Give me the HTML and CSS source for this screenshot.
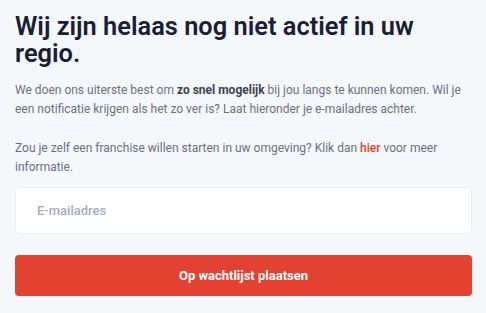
FILE: index.html
```html
<!DOCTYPE html>
<html lang="nl">
<head>
<meta charset="utf-8">
<link rel="stylesheet" href="styles.css">
</head>
<body>
<main class="notice">
  <h1 class="notice-title">Wij zijn helaas nog niet actief in uw regio.</h1>
  <p class="notice-text">We doen ons uiterste best om <strong>zo snel mogelijk</strong> bij jou langs te kunnen komen. Wil je een notificatie krijgen als het zo ver is? Laat hieronder je e-mailadres achter.</p>
  <p class="notice-text">Zou je zelf een franchise willen starten in uw omgeving? Klik dan <a class="notice-link" href="#">hier</a> voor meer informatie.</p>
  <form class="waitlist">
    <input class="waitlist-input" type="email" placeholder="E-mailadres">
    <button class="waitlist-button" type="button">Op wachtlijst plaatsen</button>
  </form>
</main>
</body>
</html>
```
FILE: styles.css
```css
html, body {
  margin: 0;
  padding: 0;
  background: #f5f8fb;
}
body {
  font-family: Roboto, "Noto Sans", sans-serif;
}
.notice {
  padding: 13px 14px 0 15px;
}
.notice-title {
  margin: 0 0 14px;
  font-size: 25.4px;
  line-height: 27px;
  font-weight: 600;
  color: #172035;
}
.notice-text {
  margin: 0 0 21px;
  font-size: 12px;
  line-height: 18.5px;
  color: #6c707c;
}
.notice-text strong {
  font-weight: 700;
  color: #3e4150;
}
.notice-link {
  color: #e2402f;
  text-decoration: none;
  font-weight: 500;
}
.waitlist {
  display: flex;
  flex-direction: column;
  gap: 21px;
  margin-top: -10px;
}
.waitlist-input {
  box-sizing: border-box;
  height: 47px;
  padding: 0 21px;
  border: 1px solid #e9edf2;
  border-radius: 4px;
  background: #fff;
  font-family: inherit;
  font-size: 13px;
  font-weight: 500;
  color: #333;
  outline: none;
}
.waitlist-input::placeholder {
  color: #a8abbf;
}
.waitlist-button {
  height: 41px;
  border: none;
  border-radius: 4px;
  background: #e34132;
  color: #fff;
  font-family: inherit;
  font-size: 13px;
  font-weight: 700;
}
```
